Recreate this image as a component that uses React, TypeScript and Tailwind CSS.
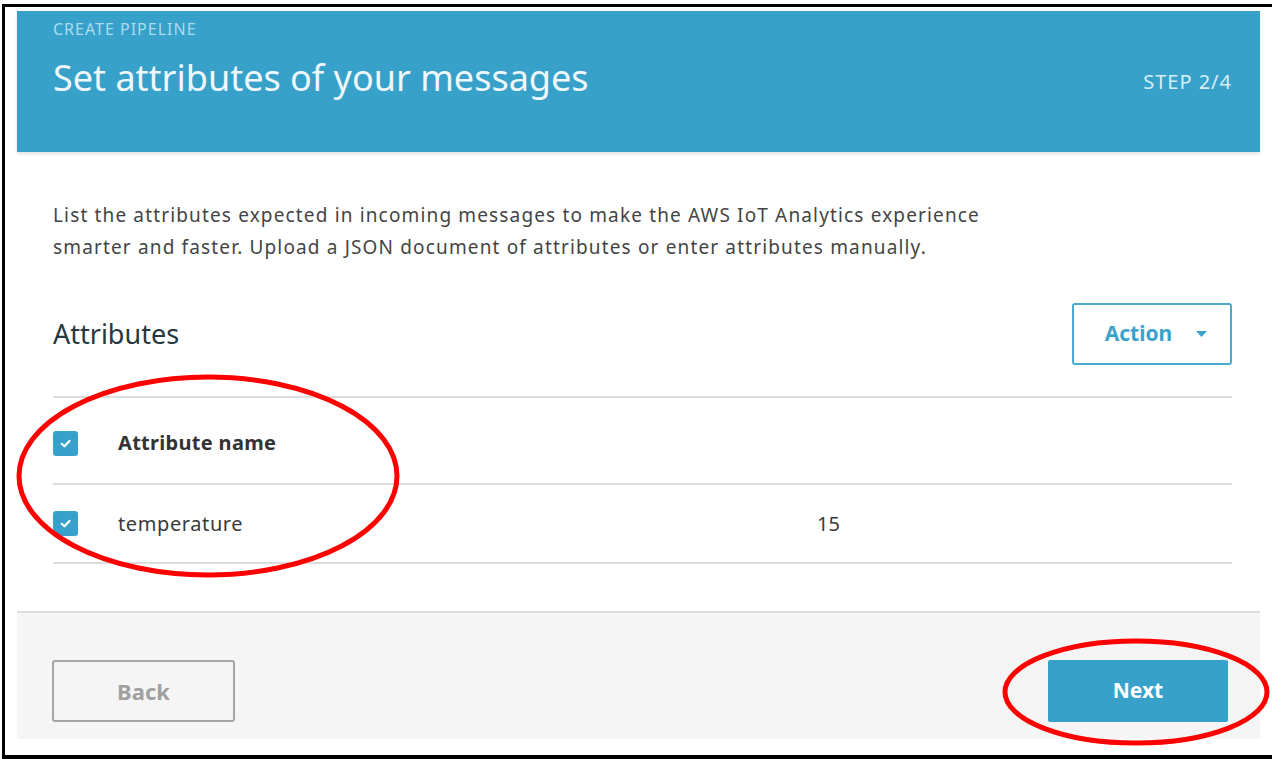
const font = { fontFamily: '"Noto Sans", "Open Sans", sans-serif' };

const Check = () => (
  <span className="flex h-[25px] w-[25px] shrink-0 items-center justify-center rounded-[3px] bg-[#38a1cb]">
    <svg width="13" height="13" viewBox="0 0 12 12" fill="none">
      <path d="M2.5 6.3 L5 8.6 L9.6 3.6" stroke="#fff" strokeWidth="2" strokeLinecap="round" strokeLinejoin="round" />
    </svg>
  </span>
);

export default function App() {
  return (
    <div className="relative h-[759px] w-[1272px] overflow-hidden bg-white pl-[2px] pt-[4px]" style={font}>
      <div className="flex h-[755px] w-[1270px] flex-col border-b-[4px] border-l-[3px] border-t-[3px] border-black pl-[12px] pt-[4px]">
        <div className="w-[1243px]">
          {/* header */}
          <div className="h-[141px] bg-[#37a1ca] px-[36px] pt-[8px] shadow-[0_2px_3px_rgba(0,0,0,0.12)]">
            <div className="text-[16px] leading-[20px] tracking-[1px] text-[#a9dcef]">CREATE PIPELINE</div>
            <div className="mt-[17px] flex items-center justify-between">
              <h1 className="text-[36px] leading-[44px] text-[#eef7fb]">Set attributes of your messages</h1>
              <span className="mr-[-8px] mt-[8px] text-[20px] tracking-[1px] text-[#d6eef7]">STEP 2/4</span>
            </div>
          </div>

          {/* body */}
          <div className="px-[36px] pr-[28px]">
            <p className="mt-[47px] w-[945px] text-[19px] leading-[32px] tracking-[1.15px] text-[#444]">
              List the attributes expected in incoming messages to make the AWS IoT Analytics experience smarter and faster. Upload a JSON document of attributes or enter attributes manually.
            </p>
            <div className="mt-[40px] flex h-[62px] items-center justify-between">
              <h2 className="text-[27px] text-[#263840]">Attributes</h2>
              <button className="flex h-[62px] w-[160px] items-center justify-center gap-[24px] rounded-[3px] border-2 border-[#4aaad0] bg-white pl-[8px] text-[21px] font-bold text-[#3aa2cb]">
                Action
                <svg width="11" height="6" viewBox="0 0 11 6"><path d="M0 0 L11 0 L5.5 6 Z" fill="#3aa2cb" /></svg>
              </button>
            </div>
            <div className="mt-[31px] border-t-2 border-[#ddd]">
              <div className="flex h-[87px] items-center border-b-2 border-[#ddd] pt-[5px]">
                <Check />
                <span className="ml-[40px] text-[20px] font-bold tracking-[0.3px] text-[#333]">Attribute name</span>
              </div>
              <div className="flex h-[79px] items-center border-b-2 border-[#ddd]">
                <Check />
                <span className="ml-[40px] w-[699px] text-[20px] tracking-[0.6px] text-[#3a3a3a]">temperature</span>
                <span className="text-[20px] text-[#3a3a3a]">15</span>
              </div>
            </div>
          </div>

          {/* footer */}
          <div className="mt-[47px] flex h-[128px] items-start justify-between border-t-2 border-[#ddd] bg-[#f5f5f5] pl-[35px] pr-[32px] pt-[47px]">
            <button className="h-[62px] w-[183px] rounded-[3px] border-2 border-[#a5a5a5] bg-[#f5f5f5] text-[22px] font-bold text-[#a0a0a0]">Back</button>
            <button className="h-[62px] w-[180px] rounded-[2px] bg-[#37a1ca] text-[21px] font-bold text-white">Next</button>
          </div>
        </div>
      </div>

      {/* annotations */}
      <svg className="pointer-events-none absolute left-0 top-0" width="1272" height="759">
        <ellipse cx="208" cy="476" rx="189" ry="99" fill="none" stroke="#f00" strokeWidth="5" />
        <ellipse cx="1136" cy="692" rx="131" ry="51" fill="none" stroke="#f00" strokeWidth="5" />
      </svg>
    </div>
  );
}
